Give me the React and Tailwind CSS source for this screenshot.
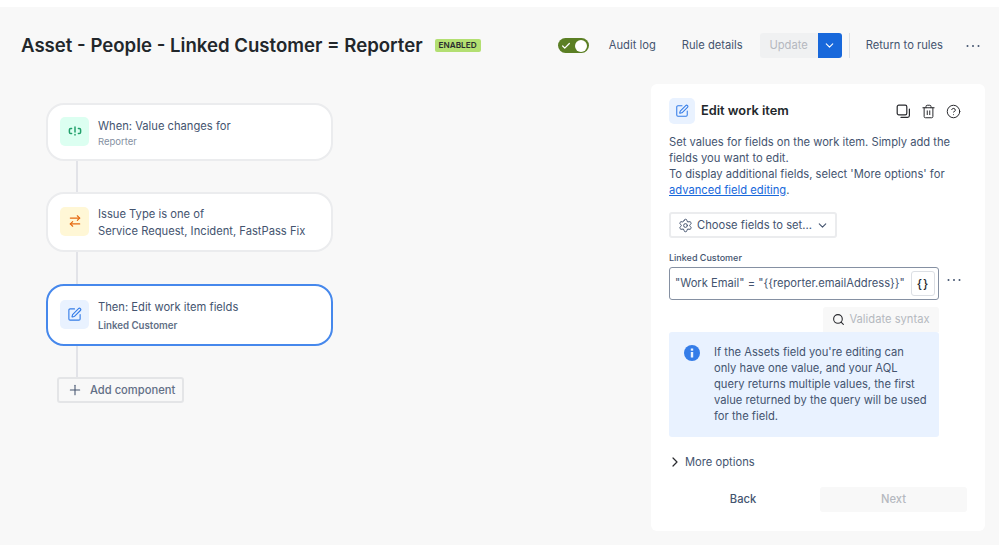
import React from "react";
import { SquarePen, Trash2, CircleHelp, Settings, Search, Plus, ChevronDown, ChevronRight, ArrowRightLeft, Check } from "lucide-react";

function Dots({ className }) {
  return (
    <svg width="14" height="4" viewBox="0 0 14 4" className={className}>
      <circle cx="1.5" cy="2" r="1" fill="#44546f" />
      <circle cx="7" cy="2" r="1" fill="#44546f" />
      <circle cx="12.5" cy="2" r="1" fill="#44546f" />
    </svg>
  );
}

function ValueIcon() {
  return (
    <svg width="16" height="12" viewBox="0 0 16 12" fill="none" stroke="#22a06b" strokeWidth="1.5" strokeLinecap="round">
      <path d="M4.6 3.4H3.8Q2.4 3.4 2.4 4.8V7.2Q2.4 8.6 3.8 8.6H4.6" />
      <path d="M11.4 3.4H12.2Q13.6 3.4 13.6 4.8V7.2Q13.6 8.6 12.2 8.6H11.4" />
      <path d="M8 2V7" />
      <path d="M8 9.6V10" />
    </svg>
  );
}

function CopyIcon() {
  return (
    <svg width="15" height="15" viewBox="0 0 15 15" fill="none" stroke="#292a2e" strokeWidth="1.2" strokeLinecap="round">
      <rect x="1.2" y="1.2" width="9.6" height="9.6" rx="1.6" />
      <path d="M13.4 5V11.6Q13.4 13.4 11.6 13.4H5" />
    </svg>
  );
}

function Card({ tile, icon, title, sub, subClass, border, h }) {
  return (
    <div className={`flex items-center gap-[9px] w-[287px] bg-white rounded-[18px] pl-[12px] ${border} ${h}`}>
      <div className={`w-[29px] h-[29px] mt-[-2px] rounded-[5px] flex items-center justify-center shrink-0 ${tile}`}>{icon}</div>
      <div className="min-w-0 mt-[2px]">
        <div className="text-[11.2px] leading-[17px] text-[#44546f]">{title}</div>
        <div className={subClass}>{sub}</div>
      </div>
    </div>
  );
}

function Line({ h }) {
  return <div className={`w-[2px] ml-[30px] bg-[#e2e3e8] ${h}`} />;
}

export default function App() {
  return (
    <div className="w-[999px] h-[545px] overflow-hidden bg-white font-['Inter',sans-serif] text-[#292a2e]">
      <div className="h-[7px] bg-white" />
      <div className="h-[538px] bg-[#f8f8f8]">
        <header className="h-[77px] flex items-center pl-[21px] pr-[19px]">
          <h1 className="text-[18.6px] font-semibold whitespace-nowrap text-[#22272b]">Asset - People - Linked Customer = Reporter</h1>
          <span className="ml-[12px] mt-[-1px] h-[13px] px-[4px] rounded-[2px] bg-[#b3df72] text-[8.2px] leading-[13px] font-semibold text-[#292a2e]">ENABLED</span>
          <div className="ml-auto flex items-center">
            <div className="w-[31px] h-[15px] rounded-full bg-[#5b7f24] flex items-center justify-between pl-[3px] pr-[2px]">
              <Check size={10} color="#fff" strokeWidth={3} />
              <div className="w-[12px] h-[12px] rounded-full bg-white" />
            </div>
            <span className="ml-[20px] text-[11.2px] text-[#44546f]">Audit log</span>
            <span className="ml-[26px] text-[11.2px] text-[#44546f]">Rule details</span>
            <div className="ml-[17px] flex h-[25px]">
              <div className="w-[58px] flex items-center justify-center bg-[#f0f1f2] rounded-l-[3px] text-[11.2px] text-[#b5b8bf]">Update</div>
              <div className="w-[24px] flex items-center justify-center bg-[#1868db] rounded-r-[3px]"><ChevronDown size={13} color="#fff" strokeWidth={2} /></div>
            </div>
            <div className="ml-[7px] w-[1px] h-[25px] bg-[#dcdfe4]" />
            <span className="ml-[16px] text-[11.2px] text-[#44546f]">Return to rules</span>
            <Dots className="ml-[23px]" />
          </div>
        </header>
        <div className="flex justify-between pl-[46px] pr-[14px]">
          <div className="pt-[19px]">
            <Card tile="bg-[#dcfff1]" icon={<ValueIcon />} title="When: Value changes for" sub="Reporter" subClass="text-[9.5px] leading-[14px] text-[#8590a2]" border="border-2 border-[#ebecee]" h="h-[58px]" />
            <Line h="h-[31px]" />
            <Card tile="bg-[#fff7d6]" icon={<ArrowRightLeft size={14} color="#e56910" strokeWidth={2} />} title="Issue Type is one of" sub="Service Request, Incident, FastPass Fix" subClass="text-[11.2px] leading-[17px] text-[#44546f]" border="border-2 border-[#ebecee]" h="h-[60px]" />
            <Line h="h-[32px]" />
            <Card tile="bg-[#e9f2ff]" icon={<SquarePen size={15} color="#357de8" strokeWidth={1.8} />} title="Then: Edit work item fields" sub="Linked Customer" subClass="mt-[2px] text-[9.7px] leading-[15px] font-semibold text-[#626f86]" border="border-2 border-[#4688ec]" h="h-[62px]" />
            <Line h="h-[31px]" />
            <div className="ml-[11px] w-[127px] h-[26px] rounded-[3px] border-2 border-[#e4e5e7] bg-[#f8f8f8] flex items-center pl-[8px] gap-[7px]">
              <Plus size={16} color="#44546f" strokeWidth={1.6} />
              <span className="text-[11.2px] font-medium text-[#626f86] whitespace-nowrap">Add component</span>
            </div>
          </div>
          <aside className="w-[334px] h-[447px] bg-white rounded-[6px] px-[18px] pt-[14px]">
            <div className="flex items-center h-[26px]">
              <div className="w-[26px] h-[26px] rounded-[5px] bg-[#e9f2ff] flex items-center justify-center"><SquarePen size={14} color="#357de8" strokeWidth={1.8} /></div>
              <span className="ml-[6px] text-[12.8px] font-semibold text-[#22272b]">Edit work item</span>
              <div className="ml-auto mr-[6px] flex items-center gap-[10px]">
                <CopyIcon />
                <Trash2 size={15} color="#292a2e" strokeWidth={1.6} />
                <CircleHelp size={15} color="#292a2e" strokeWidth={1.6} />
              </div>
            </div>
            <p className="mt-[10px] text-[11.2px] leading-[16px] text-[#44546f]">
              Set values for fields on the work item. Simply add the fields you want to edit.<br />
              To display additional fields, select 'More options' for{" "}
              <span className="text-[#1868db] underline">advanced field editing</span>.
            </p>
            <div className="mt-[14px] w-[168px] h-[26px] rounded-[3px] border-2 border-[#ebecee] flex items-center pl-[7px] gap-[4px]">
              <Settings size={15} color="#44546f" strokeWidth={1.6} />
              <span className="text-[11.2px] text-[#44546f] whitespace-nowrap">Choose fields to set...</span>
              <ChevronDown size={13} color="#44546f" />
            </div>
            <div className="mt-[14px] text-[9px] leading-[12px] font-medium text-[#44546f]">Linked Customer</div>
            <div className="mt-[3px] flex items-center">
              <div className="w-[270px] h-[33px] rounded-[3px] border border-[#8590a2] flex items-center justify-between pl-[5px] pr-[3px]">
                <span className="text-[11.2px] text-[#44546f] whitespace-nowrap">"Work Email" = "{"{{"}reporter.emailAddress{"}}"}"</span>
                <div className="w-[24px] h-[25px] rounded-[3px] border border-[#dcdfe4] flex items-center justify-center text-[12px] font-medium tracking-[1px] text-[#292a2e]">{"{}"}</div>
              </div>
              <Dots className="ml-[8px] mt-[-7px]" />
            </div>
            <div className="mt-[7px] ml-[154px] w-[116px] h-[25px] rounded-t-[3px] bg-[#f8f8f8] flex items-center justify-center gap-[4px]">
              <Search size={13} color="#292a2e" strokeWidth={2} />
              <span className="text-[11.2px] text-[#b5b8bf] whitespace-nowrap">Validate syntax</span>
            </div>
            <div className="w-[270px] h-[105px] rounded-[3px] bg-[#e9f2ff] flex pl-[15px] pt-[12px]">
              <svg width="16" height="16" viewBox="0 0 16 16" className="shrink-0 mt-[1px]">
                <circle cx="8" cy="8" r="8" fill="#357de8" />
                <rect x="6.8" y="3.5" width="2.4" height="2.2" fill="#e9f2ff" />
                <rect x="6.8" y="7" width="2.4" height="5.5" fill="#e9f2ff" />
              </svg>
              <p className="ml-[14px] w-[214px] text-[11.2px] leading-[16px] text-[#44546f]">If the Assets field you're editing can only have one value, and your AQL query returns multiple values, the first value returned by the query will be used for the field.</p>
            </div>
            <div className="mt-[17px] flex items-center">
              <ChevronRight size={16} color="#292a2e" strokeWidth={1.8} className="ml-[-2px]" />
              <span className="ml-[2px] text-[11.2px] text-[#44546f]">More options</span>
            </div>
            <div className="mt-[16px] flex items-center">
              <div className="w-[148px] text-center text-[11.2px] font-medium text-[#44546f]">Back</div>
              <div className="ml-[3px] w-[147px] h-[25px] rounded-[3px] bg-[#f8f8f8] flex items-center justify-center text-[11.2px] font-medium text-[#b5b8bf]">Next</div>
            </div>
          </aside>
        </div>
      </div>
    </div>
  );
}
